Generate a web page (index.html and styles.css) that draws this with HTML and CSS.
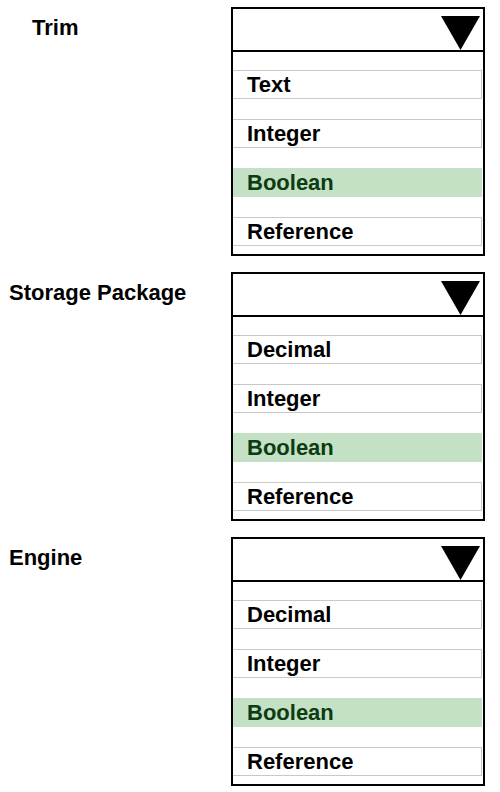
FILE: index.html
```html
<!DOCTYPE html>
<html lang="en">
<head>
    <meta charset="UTF-8">
    <meta name="viewport" content="width=device-width, initial-scale=1.0">
    <title>Field Types</title>
    <link rel="stylesheet" href="styles.css">
</head>
<body>

    <div class="field">
        <div class="field-label field-label--indent">Trim</div>
        <div class="dropdown">
            <div class="dropdown-head">
                <svg class="arrow" width="39" height="34" viewBox="0 0 39 34"><polygon points="0,0 39,0 19.5,34" fill="#000"/></svg>
            </div>
            <div class="options">
                <div class="option">Text</div>
                <div class="option">Integer</div>
                <div class="option selected">Boolean</div>
                <div class="option">Reference</div>
            </div>
        </div>
    </div>

    <div class="field">
        <div class="field-label">Storage Package</div>
        <div class="dropdown">
            <div class="dropdown-head">
                <svg class="arrow" width="39" height="34" viewBox="0 0 39 34"><polygon points="0,0 39,0 19.5,34" fill="#000"/></svg>
            </div>
            <div class="options">
                <div class="option">Decimal</div>
                <div class="option">Integer</div>
                <div class="option selected">Boolean</div>
                <div class="option">Reference</div>
            </div>
        </div>
    </div>

    <div class="field">
        <div class="field-label">Engine</div>
        <div class="dropdown">
            <div class="dropdown-head">
                <svg class="arrow" width="39" height="34" viewBox="0 0 39 34"><polygon points="0,0 39,0 19.5,34" fill="#000"/></svg>
            </div>
            <div class="options">
                <div class="option">Decimal</div>
                <div class="option">Integer</div>
                <div class="option selected">Boolean</div>
                <div class="option">Reference</div>
            </div>
        </div>
    </div>

</body>
</html>
```

FILE: styles.css
```css
body {
    font-family: 'Liberation Sans', Arial, sans-serif;
    background-color: #fff;
    margin: 0;
    padding: 7px 0 0;
    color: #000;
}
.field {
    display: grid;
    grid-template-columns: 231px 254px;
    margin-bottom: 16px;
}
.field-label {
    font-size: 22px;
    font-weight: bold;
    line-height: 26px;
    padding: 8px 0 0 9px;
}
.field-label--indent {
    padding-left: 32px;
}
.dropdown {
    box-sizing: border-box;
    width: 254px;
    border: 2px solid #000;
    background: #fff;
}
.dropdown-head {
    height: 41px;
    border-bottom: 2px solid #000;
    display: flex;
    justify-content: flex-end;
    align-items: flex-end;
    padding-right: 3px;
}
.arrow {
    display: block;
}
.options {
    display: flex;
    flex-direction: column;
    gap: 20px;
    padding: 18px 1px 8px 0;
}
.option {
    box-sizing: border-box;
    height: 29px;
    border: 1px solid #c8c8c8;
    border-left: none;
    padding-left: 14px;
    font-size: 22px;
    font-weight: bold;
    line-height: 28px;
}
.selected {
    background-color: #c5e1c5;
    border-color: #c5e1c5;
    color: #0d3b12;
}
```
